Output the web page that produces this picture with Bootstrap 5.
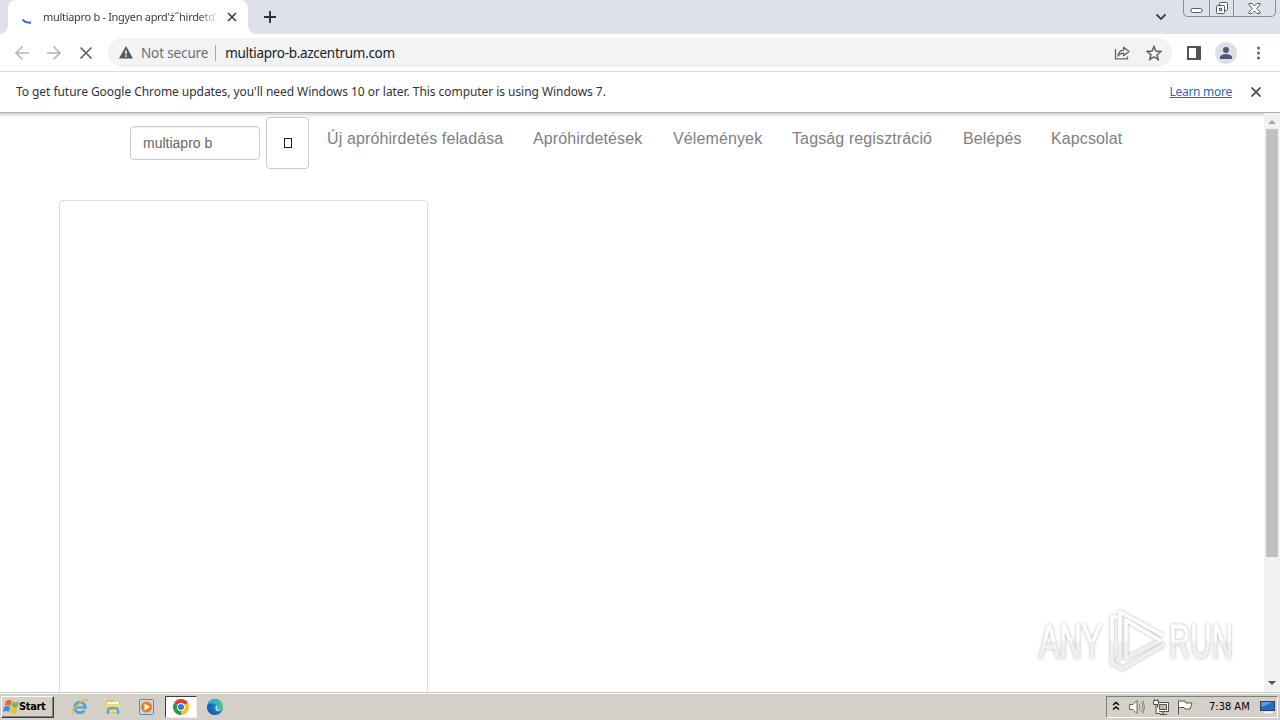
<!DOCTYPE html>
<html lang="hu">
<head>
<meta charset="utf-8">
<meta name="viewport" content="width=device-width, initial-scale=1">
<title>multiapro b</title>
<link href="https://cdn.jsdelivr.net/npm/bootstrap@5.3.0/dist/css/bootstrap.min.css" rel="stylesheet">
<style>
body{width:1280px;height:720px;overflow:hidden;font-family:"Noto Sans","Open Sans",sans-serif;font-size:12px;line-height:16px;color:#333;background:#fff}
svg{display:block;flex:none}
.tabstrip{height:34px;background:#dee1e8}
.tab{width:240px;height:34px;margin-left:8px;background:#fff;border-radius:8px 8px 0 0}
.tab::before,.tab::after{content:"";position:absolute;bottom:0;width:8px;height:8px}
.tab::before{left:-8px;background:radial-gradient(circle at 0 0,transparent 7.5px,#fff 8px)}
.tab::after{right:-8px;background:radial-gradient(circle at 100% 0,transparent 7.5px,#fff 8px)}
.tab-name{width:176px;margin-left:1px;font-size:11px;letter-spacing:-.31px;color:#3c4043;-webkit-mask-image:linear-gradient(90deg,#000 88%,transparent);mask-image:linear-gradient(90deg,#000 88%,transparent)}
.winbtns{width:93px;height:17px;margin-right:4px;border:1px solid #8a8e96;border-top:0;border-radius:0 0 5px 5px}
.winbtns>span+span{border-left:1px solid #8a8e96}
.toolbar{height:38px;border-bottom:1px solid #dadce0}
.omni{width:1064px;height:29px;margin-left:14px;background:#f1f3f4;border-radius:15px}
.omni .sec{letter-spacing:-.14px;color:#6a6e73;font-size:13.5px}
.omni .sep{width:1px;height:16px;background:#a5a8ac;margin:0 9px 0 7px}
.omni .url{color:#202124;font-size:13.5px;letter-spacing:-.3px}
.avatar{width:22px;height:22px;background:#dce0e6}
.infobar{height:41px;font-size:12px;border-bottom:1px solid #b0b0b0}
.info-text{letter-spacing:-.055px}
.infobar a{color:#2a67b5;letter-spacing:-.27px}
.view{height:579px;box-shadow:inset 0 2px 0 #dcdcdc,inset 0 4px 0 #f3f3f3}
.site{font-family:"Liberation Sans",Arial,sans-serif}
.head{height:87px;padding-left:130px;padding-top:4px}
.field{width:130px;height:34px;margin-top:9px;border:1px solid #ccc;border-radius:4px;padding:0 12px;font-size:14px;color:#666;background:#fff;box-shadow:inset 0 1px 1px #00000013}
.find{width:43px;height:52px;margin-left:6px;border:1px solid #ccc;border-radius:4px;background:#fff}
.glyph{width:8px;height:10px;border:1px solid #222}
.menu{margin-left:18px;padding-top:11px;font-size:16px;line-height:22px;letter-spacing:.12px;color:#808080}
.menu a{color:inherit;text-decoration:none;white-space:nowrap}
.panelbox{width:369px;height:492px;margin-left:59px;border:1px solid #ddd;border-bottom:0;border-radius:4px 4px 0 0}
.scroll{width:16px;background:#f1f1f1}
.thumb{width:12px;height:428px;background:#c1c1c1}
.brandmark{left:1030px;top:485px}
.taskbar{height:28px;background:#d4d0c8;border-top:1px solid #c9c6bd;box-shadow:inset 0 1px 0 #fff;padding-top:3px;color:#000;font-family:"DejaVu Sans Condensed","DejaVu Sans",sans-serif}
.start{width:53px;height:22px;margin-left:1px;border:1px solid;border-color:#fff #404040 #404040 #fff;box-shadow:inset -1px -1px #808080;font:bold 11px "DejaVu Sans Condensed","DejaVu Sans",sans-serif;letter-spacing:-.35px}
.active-app{width:32px;height:22px;background:#fff;border:1px solid;border-color:#404040 #eee #eee #404040}
.tray{width:172px;height:22px;margin-right:2px;border:1px solid;border-color:#808080 #fff #fff #808080;font-size:11px}
</style>
</head>
<body class="d-flex flex-column">
<header>
<div class="tabstrip d-flex">
  <div class="tab d-flex align-items-center position-relative">
    <svg class="ms-2" width="26" height="26" viewBox="0 0 26 26"><path d="M6.500 15.500Q9.500 19.300 15 18.500" fill="none" stroke="#3367d6" stroke-width="2"/></svg>
    <div class="tab-name text-nowrap overflow-hidden">multiapro b - Ingyen aprd'ż˝hirdetd'ż</div>
    <svg class="ms-2" width="10" height="10" viewBox="0 0 10 10"><path d="M1 1l8 8M9 1L1 9" stroke="#3c4043" stroke-width="1.700"/></svg>
  </div>
  <svg class="align-self-center ms-3" width="12" height="12" viewBox="0 0 12 12"><path d="M6 0v12M0 6h12" stroke="#303238" stroke-width="1.900"/></svg>
  <svg class="ms-auto mt-2 me-3" width="12" height="16" viewBox="0 0 12 16"><path d="M1.500 6.500L6 11l4.500-4.500" fill="none" stroke="#3c4043" stroke-width="1.800"/></svg>
  <div class="winbtns d-flex">
    <span class="d-flex align-items-end justify-content-center" style="width:25px"><svg width="13" height="8" viewBox="0 0 13 8"><rect x="1" y=".5" width="11" height="4" rx="1.500" fill="#fff" stroke="#555a66"/></svg></span>
    <span class="d-flex align-items-center justify-content-center" style="width:25px"><svg width="14" height="14" viewBox="0 0 14 14" fill="#f7f7f9" stroke="#555a66"><rect x="4.500" y="1.500" width="8" height="8" rx="1"/><rect x="1.500" y="4.500" width="8" height="8" rx="1"/><rect x="4.500" y="7.500" width="2" height="2"/></svg></span>
    <span class="d-flex align-items-center justify-content-center" style="width:42px"><svg width="13" height="11" viewBox="0 0 13 11"><path d="M1 .5h3l2.500 2.500L9 .5h3v1.500L8.500 5.500 12 9v1.500H9L6.500 8 4 10.500H1V9l3.500-3.500L1 2z" fill="#fff" stroke="#555a66"/></svg></span>
  </div>
</div>
<div class="toolbar d-flex align-items-center">
  <svg style="margin-left:14px" width="80" height="16" viewBox="0 0 80 16" fill="none" stroke-width="1.700"><path d="M15 8H2M8.500 1.500L2 8l6.500 6.500M33 8h13M39.500 1.500L46 8l-6.500 6.500" stroke="#b4b6b9"/><path d="M66.500 2.500l11 11M77.500 2.500l-11 11" stroke="#5f6368"/></svg>
  <div class="omni d-flex align-items-center text-nowrap">
    <svg style="margin-left:11px;margin-right:8px" width="14" height="13" viewBox="0 0 14 13"><path d="M7 0l7 12.500H0z" fill="#55585c"/><path d="M7 4.500v3.700M7 9.300V11" stroke="#fff" stroke-width="1.500"/></svg>
    <span class="sec">Not secure</span><span class="sep"></span><span class="url">multiapro-b.azcentrum.com</span>
    <svg class="ms-auto" width="16" height="16" viewBox="0 0 16 16" fill="none" stroke="#5f6368" stroke-width="1.300"><path d="M1.500 4v9.800h12V11.500"/><path d="M4 11C4.300 7.300 6.300 5.200 9.700 5.100V2.200L15 6.500l-5.300 4.200V8.100C7 8.100 5.300 9 4 11z" stroke-linejoin="round"/></svg>
    <svg style="margin:0 10px 0 16px" width="16" height="16" viewBox="0 0 16 16"><path d="M8 1.500l1.900 4.600 4.900.4-3.700 3.200 1.100 4.800L8 11.900l-4.200 2.600 1.100-4.800L1.200 6.500l4.900-.4z" fill="none" stroke="#5f6368" stroke-width="1.500"/></svg>
  </div>
  <svg style="margin-left:15px" width="14" height="14" viewBox="0 0 14 14"><path d="M0 0h14v14H0zM2 2v10h7V2z" fill="#505357" fill-rule="evenodd"/></svg>
  <span class="avatar rounded-circle d-flex align-items-center justify-content-center" style="margin-left:14px"><svg width="14" height="14" viewBox="0 0 14 14" fill="#4d5b78"><circle cx="7" cy="4" r="3"/><path d="M1 13v-2c0-2 4-3 6-3s6 1 6 3v2z"/></svg></span>
  <svg style="margin-left:19px" width="5" height="14" viewBox="0 0 5 14" fill="#5f6368"><circle cx="2.500" cy="2" r="1.500"/><circle cx="2.500" cy="7" r="1.500"/><circle cx="2.500" cy="12" r="1.500"/></svg>
</div>
<div class="infobar d-flex align-items-center ps-3">
  <span class="text-nowrap info-text">To get future Google Chrome updates, you'll need Windows 10 or later. This computer is using Windows 7.</span>
  <a href="#" class="ms-auto">Learn more</a>
  <svg style="margin:0 19px 0 19px" width="10" height="10" viewBox="0 0 10 10"><path d="M.5.500l9 9M9.500.500l-9 9" stroke="#505357" stroke-width="1.900"/></svg>
</div>
</header>
<main class="view d-flex position-relative">
  <div class="site flex-grow-1">
    <div class="head d-flex align-items-start">
      <div class="field d-flex align-items-center">multiapro b</div>
      <div class="find d-flex align-items-center justify-content-center"><span class="glyph"></span></div>
      <nav class="menu d-flex"><a href="#" style="width:206px">Új apróhirdetés feladása</a><a href="#" style="width:140px">Apróhirdetések</a><a href="#" style="width:119px">Vélemények</a><a href="#" style="width:171px">Tagság regisztráció</a><a href="#" style="width:88px">Belépés</a><a href="#">Kapcsolat</a></nav>
    </div>
    <div class="panelbox"></div>
  </div>
  <div class="scroll d-flex flex-column align-items-center">
    <svg width="16" height="16" viewBox="0 0 16 16"><path d="M4 11l4-4 4 4z" fill="#a3a3a3"/></svg>
    <div class="thumb"></div>
    <svg class="mt-auto" width="16" height="17" viewBox="0 0 16 17"><path d="M4 6l4 4 4-4z" fill="#505050"/></svg>
  </div>
  <svg class="brandmark position-absolute" width="225" height="85" viewBox="1030 598 225 85">
    <defs><filter id="sh" x="-10%" y="-15%" width="120%" height="130%"><feDropShadow dx="0" dy="0" stdDeviation="1.600" flood-color="#777" flood-opacity=".6"/></filter>
    <linearGradient id="fade" x1="0" y1="608" x2="0" y2="672" gradientUnits="userSpaceOnUse"><stop offset=".5" stop-color="#fff"/><stop offset=".54" stop-color="#f0f0f0"/></linearGradient></defs>
    <g filter="url(#sh)" fill="url(#fade)" stroke="url(#fade)" font-family="'Liberation Sans Narrow','Liberation Sans',sans-serif" font-size="49">
      <text x="1039" y="658" textLength="63" lengthAdjust="spacingAndGlyphs" stroke-width=".8">ANY</text>
      <text x="1169" y="658" textLength="64" lengthAdjust="spacingAndGlyphs" stroke-width=".8">RUN</text>
      <g fill="none" stroke-width="3.600" stroke-linejoin="round" stroke-linecap="round"><path d="M1116 617h-4v46l3 2"/><path d="M1120 653v-41l42 23"/><path d="M1158 639l-32-19v38l34-17"/><path d="M1163 645l-41 24-4-3"/><path d="M1117 660l3-2v-4"/></g>
    </g>
  </svg>
</main>
<footer class="taskbar d-flex">
  <div class="start d-flex align-items-center"><svg width="19" height="18" viewBox="0 0 19 18"><path d="M4 3q3-2 6 0L8.500 8q-3-2-6 0z" fill="#e8642c"/><path d="M11 3.500q3 2 6 0L15.500 9q-3 1.500-6-.5z" fill="#79b843"/><path d="M2.200 9q3-2 6 0L7 14q-3-2-6 0z" fill="#3b8ede"/><path d="M9.200 9.500q3 2 6 .5L14 15q-3 1.500-6-.5z" fill="#f6bd22"/></svg><span style="margin-left:-2px;margin-top:-1px">Start</span></div>
  <svg style="margin-left:16px" width="20" height="22" viewBox="0 0 20 22"><circle cx="10" cy="11.500" r="5.300" fill="none" stroke="#4aa4e0" stroke-width="3"/><path d="M5 11.500h11" stroke="#4aa4e0" stroke-width="2.200"/><path d="M13 12.800h5v2h-4z" fill="#d4d0c8"/><path d="M3 18Q0 15 8 8.500 16 2 18 4.500" fill="none" stroke="#e4b83d" stroke-width="1.500"/></svg>
  <svg style="margin-left:13px" width="20" height="22" viewBox="0 0 20 22"><path d="M3 5l2-1h5l1 2h6v11H3z" fill="#e3c05a"/><path d="M4 6h12v4H4z" fill="#fffbe5"/><path d="M3 8h14v8H3z" fill="#f2d778"/><path d="M5 18v-4q0-2 5-2t5 2v4" fill="none" stroke="#58aadb" stroke-width="2.400"/></svg>
  <svg style="margin-left:15px" width="18" height="22" viewBox="0 0 18 22"><rect x="1.500" y="3.500" width="14" height="15" rx="1" fill="#bddcf2" stroke="#478dc4"/><circle cx="8.500" cy="11" r="5.500" fill="#f27c13"/><path d="M6.500 7.500l5.500 3.500-5.500 3.500z" fill="#fff"/></svg>
  <div class="active-app d-flex align-items-center justify-content-center" style="margin-left:9px"><svg width="16" height="16" viewBox="0 0 16 16"><path d="M8 8L1.070 4A8 8 0 0 1 14.930 4z" fill="#e33b2e"/><path d="M8 8l6.930-4A8 8 0 0 1 8 16z" fill="#fbc116"/><path d="M8 8v8A8 8 0 0 1 1.070 4z" fill="#299b47"/><circle cx="8" cy="8" r="4" fill="#fff"/><circle cx="8" cy="8" r="3" fill="#3778dc"/></svg></div>
  <svg style="margin-left:9px" width="18" height="22" viewBox="0 0 18 22"><circle cx="9" cy="11" r="8" fill="#1678cb"/><path d="M2 7.500A8 8 0 0 1 17 11q-.5 4-5.500 3.500-2.500-.5-1-2.500 1-3-2.500-4-3-.5-6-.5z" fill="#36b5c0"/><path d="M12 4Q17 6 17 11q-.5 4-5.500 3.500Q17 10 12 4z" fill="#55c978"/><path d="M1 11q1-4 6-3.500-3 3-1 6.500 2 3 8 2-4 4-9 2-4-2-4-7z" fill="#1463b5"/><path d="M10 9.500q2 0 1.300 2.500-1 2 4 2.300l-4 .9q-3.300-2-1.300-5.700z" fill="#d4d0c8"/></svg>
  <div class="tray ms-auto d-flex align-items-center text-nowrap">
    <svg style="margin-left:5px" width="8" height="14" viewBox="0 0 8 14" fill="none" stroke="#000" stroke-width="1.400"><path d="M1 5L4 2.500 7 5M1 9.500L4 7l3 2.500"/></svg>
    <svg style="margin-left:8px" width="18" height="18" viewBox="0 0 18 18" stroke="#65655f" fill="#fff"><path d="M1.500 6.500H5l4-4v13l-4-4H1.500z"/><path d="M11 6q2 3 0 6M13 4q4 5 0 10M15 2.500q3 6.500 0 13" fill="none" stroke="#85857f"/></svg>
    <svg style="margin-left:6px" width="18" height="18" viewBox="0 0 18 18" stroke="#55554f" fill="#f5f5f2"><path d="M5.500 4.500h11v9h-11z"/><path d="M7.500 6.500h7v5h-7z" fill="#b9b9b2"/><path d="M8 16.500h7M11 13.500v3"/><path d="M1.500 2.500h5v4h-5zM4 6.500v9h4M2.500 1v2M5.500 1v2"/></svg>
    <svg style="margin-left:6px" width="18" height="18" viewBox="0 0 18 18" fill="#fff" stroke="#55554f"><path d="M2.500 2.500v14M3 3h6l1 2h6l-2 6H9L8 9.500H3"/></svg>
    <span class="clock" style="margin-left:15px;width:45px">7:38 AM</span>
    <svg style="margin-left:6px" width="16" height="16" viewBox="0 0 16 16"><rect x=".5" y="2.500" width="14" height="9" fill="#236bc1" stroke="#234675"/><path d="M1 3h12L2 8z" fill="#5a9de0"/><path d="M4 13.500h9" stroke="#f5f5f5" stroke-width="2"/></svg>
  </div>
</footer>
<script src="https://cdn.jsdelivr.net/npm/bootstrap@5.3.0/dist/js/bootstrap.bundle.min.js"></script>
</body>
</html>
